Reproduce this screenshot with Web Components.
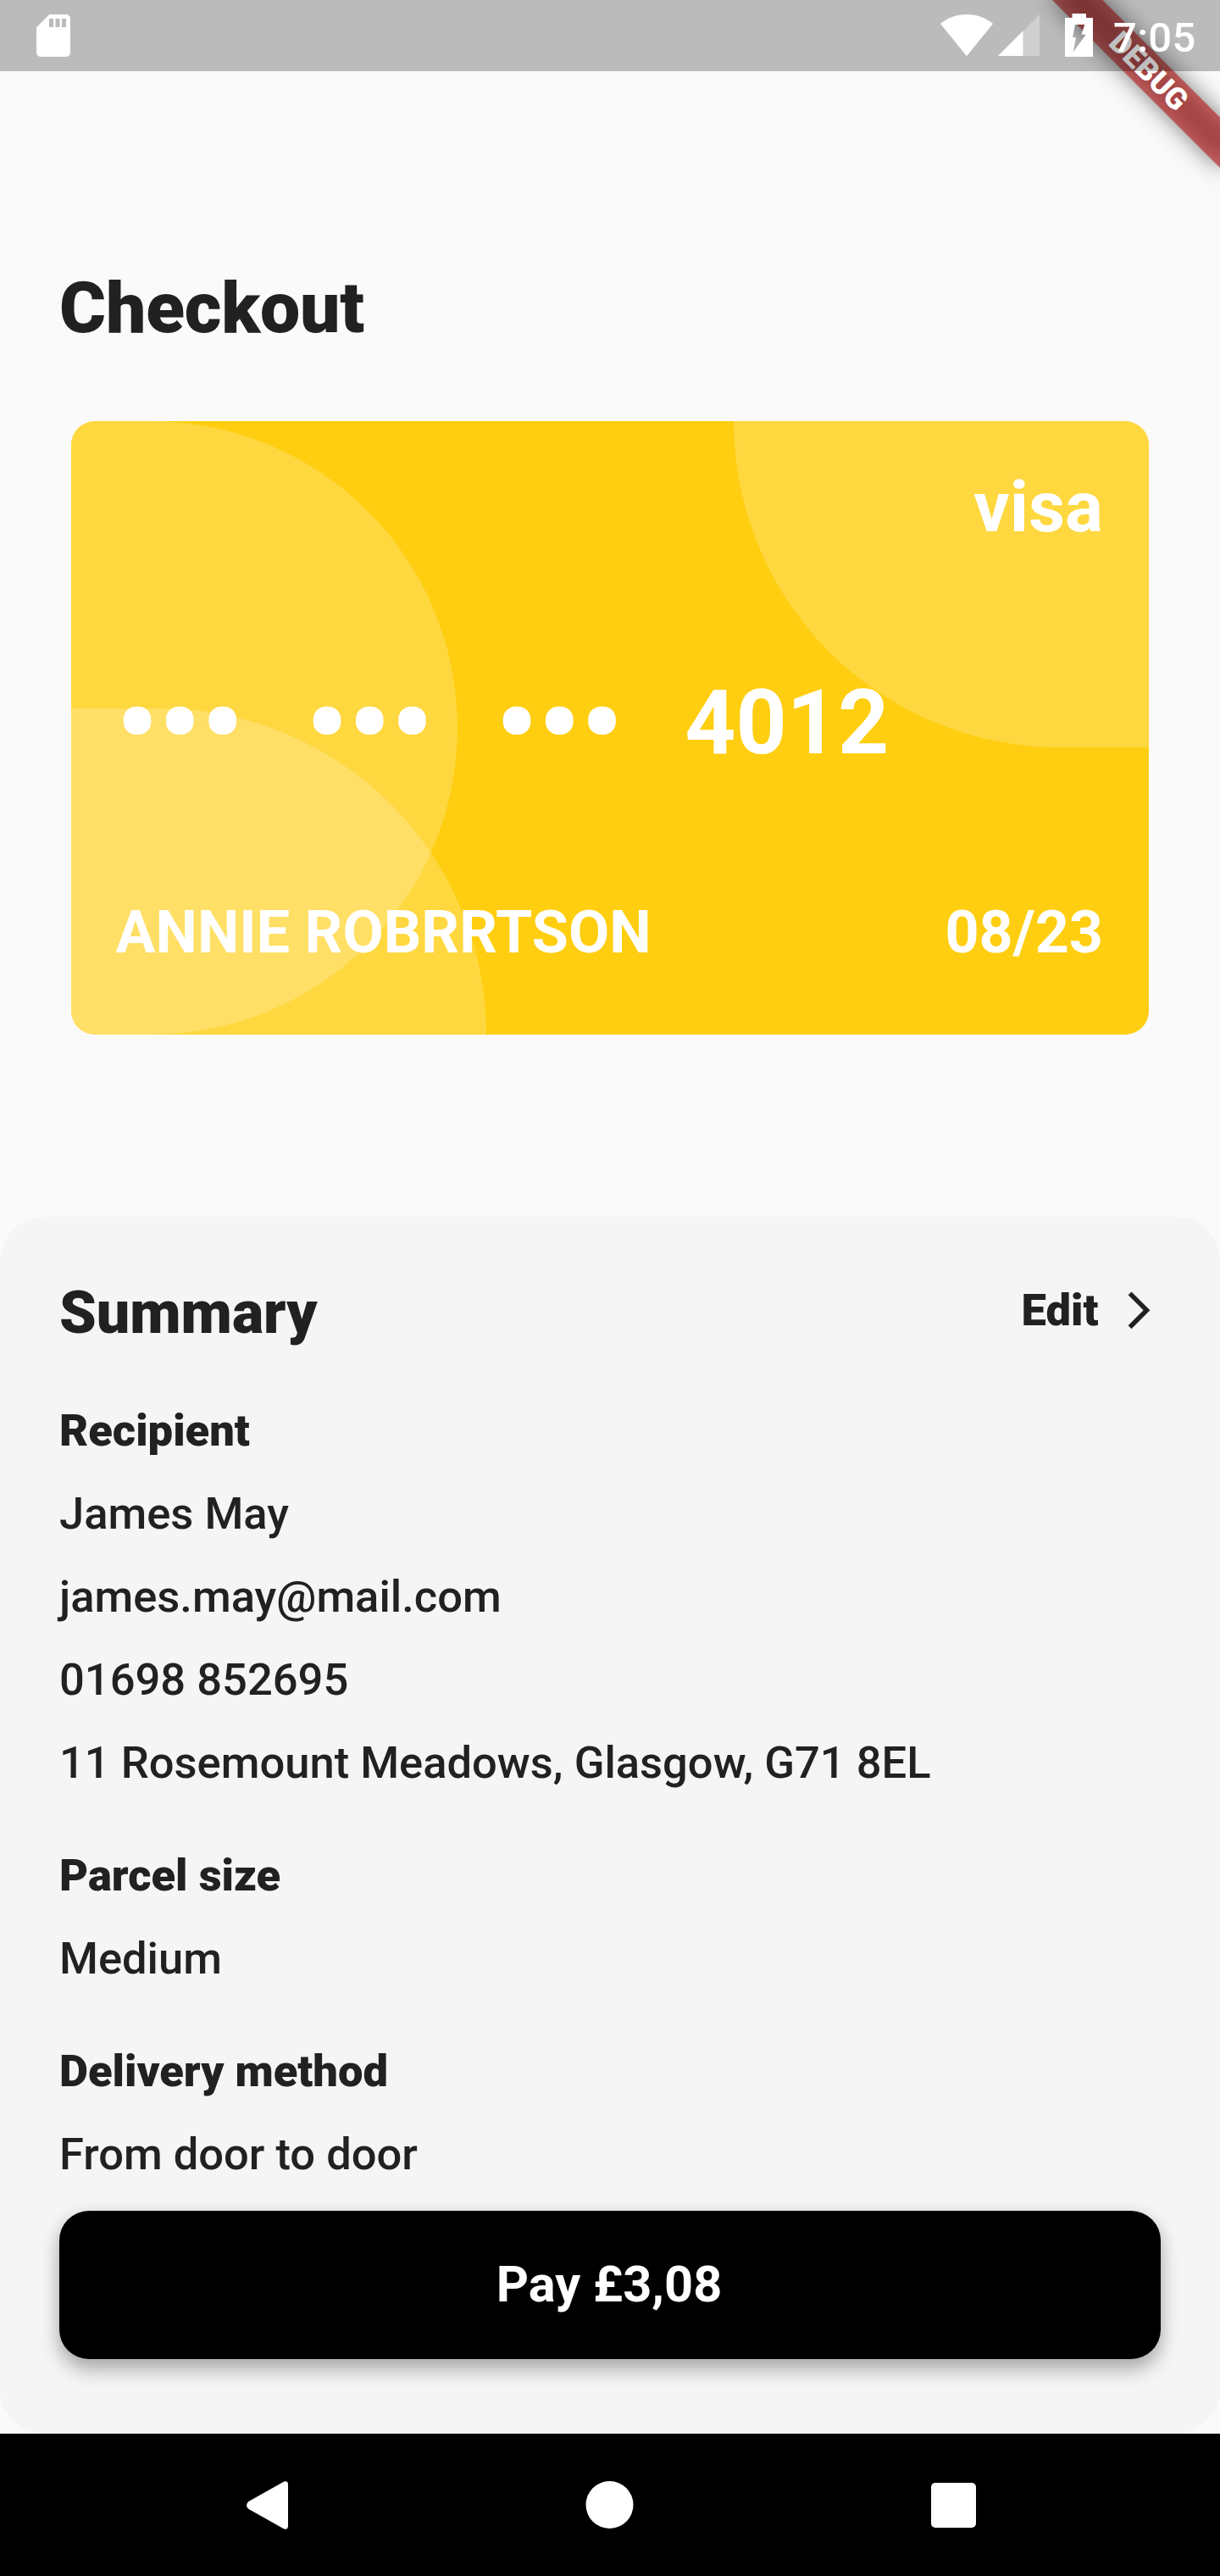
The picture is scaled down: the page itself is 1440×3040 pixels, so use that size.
<!DOCTYPE html>
<html lang="en">
<head>
<meta charset="utf-8">
<title>Checkout</title>
<style>
  html, body { margin: 0; padding: 0; background: #fafafa; }
  body { width: 1440px; height: 3040px; overflow: hidden; font-family: Roboto, sans-serif; color: #212121; }
</style>
</head>
<body>
<checkout-screen>
  <status-bar slot="status">7:05</status-bar>
  <debug-banner slot="banner">DEBUG</debug-banner>
  <span slot="title">Checkout</span>
  <bank-card slot="card">
    <span slot="brand">visa</span>
    <span slot="digits">4012</span>
    <span slot="holder">ANNIE ROBRRTSON</span>
    <span slot="expiry">08/23</span>
  </bank-card>
  <summary-panel slot="summary">
    <span slot="heading">Summary</span>
    <edit-link slot="action">Edit</edit-link>
    <summary-section heading="Recipient">
      <div>James May</div>
      <div>james.may@mail.com</div>
      <div>01698 852695</div>
      <div>11 Rosemount Meadows, Glasgow, G71 8EL</div>
    </summary-section>
    <summary-section heading="Parcel size"><div>Medium</div></summary-section>
    <summary-section heading="Delivery method"><div>From door to door</div></summary-section>
    <pay-button slot="footer">Pay £3,08</pay-button>
  </summary-panel>
  <nav-bar slot="nav"></nav-bar>
</checkout-screen>
<script>
function define(name, html) {
  const template = document.createElement('template');
  template.innerHTML = html;
  customElements.define(name, class extends HTMLElement {
    constructor() {
      super();
      this.attachShadow({ mode: 'open' }).appendChild(template.content.cloneNode(true));
    }
    connectedCallback() {
      const heading = this.shadowRoot.querySelector('[data-heading]');
      if (heading) heading.textContent = this.getAttribute('heading');
    }
  });
}

define('checkout-screen', `
  <style>
    :host { display: flex; flex-direction: column; position: relative; width: 1440px; height: 3040px; overflow: hidden; background: #fafafa; }
    h1 { margin: 0; padding: 315px 70px 0; height: 98px; font-size: 84px; line-height: 98px; font-weight: 900; letter-spacing: -.2px; }
    .card { padding: 84px 84px 0; height: 939px; }
  </style>
  <h1><slot name="title"></slot></h1>
  <div class="card"><slot name="card"></slot></div>
  <slot name="summary"></slot>
  <slot name="nav"></slot>
  <slot name="banner"></slot>
  <slot name="status"></slot>
`);

define('status-bar', `
  <style>
    :host { position: absolute; left: 0; top: 0; box-sizing: border-box; width: 1440px; height: 84px; padding: 16px 28px 0 43px; display: flex; align-items: flex-start; background: rgba(0,0,0,.25); color: #fff; font-size: 49px; font-weight: 500; line-height: 57px; }
    svg { display: block; flex: none; fill: #fff; }
    .sd { margin-right: auto; }
    .wifi { margin-right: 5px; }
    .cell { margin-right: 30px; }
    .clock { width: 98px; margin-left: 24px; letter-spacing: .3px; white-space: nowrap; }
  </style>
  <svg class="sd" width="40" height="51" viewBox="0 0 40 51"><path fill-rule="evenodd" d="M15.3 1H35a5 5 0 0 1 5 5V46a5 5 0 0 1-5 5H5a5 5 0 0 1-5-5V16.3ZM15 6V16H20V6ZM22.500 6V16H27.500V6ZM30 6V16H35V6Z"/></svg>
  <svg class="wifi" width="62" height="51" viewBox="0 0 62 51"><path d="M31 50.200 0 12C9 4.800 19.500 1 31 1S53 4.800 62 12Z"/></svg>
  <svg class="cell" width="50" height="51" viewBox="0 0 50 51"><path opacity=".3" d="M1 50 50 1V50Z"/><path d="M1 50 30.500 20.500V50Z"/></svg>
  <svg width="33" height="51" viewBox="0 0 33 51"><path fill-rule="evenodd" d="M8.500 0H25V5H33V51H0V5H8.500ZM12 13 9 28.300H13L9.500 45.800 24.700 24.800H19.500L23.300 13Z"/></svg>
  <span class="clock"><slot></slot></span>
`);

define('debug-banner', `
  <style>
    :host { position: absolute; left: 1440px; top: 0; width: 0; height: 0; transform: rotate(45deg); transform-origin: 0 0; }
    .shade, .band { position: absolute; left: -140px; top: 98px; width: 280px; height: 42px; }
    .shade { background: rgba(0,0,0,.5); filter: blur(13.9px); }
    .band { background: rgba(183,28,28,.627); color: #fff; text-align: center; font-size: 35.7px; line-height: 42px; font-weight: 900; }
  </style>
  <div class="shade"></div>
  <div class="band"><slot></slot></div>
`);

define('bank-card', `
  <style>
    :host { display: flex; flex-direction: column; justify-content: space-between; box-sizing: border-box; position: relative; height: 724.3px; padding: 57px 54px 80px 52.500px; border-radius: 28px; overflow: hidden; background: #ffce10; color: #fff; font-weight: 700; }
    .shape { position: absolute; background: rgba(255,255,255,.2); }
    .a { left: 0; top: 0; width: 455.500px; height: 100%; border-radius: 0 362px 362px 0; }
    .b { left: 0; bottom: 0; width: 490px; height: 385px; border-radius: 0 385px 0 0; }
    .c { right: 0; top: 0; width: 490px; height: 385px; border-radius: 0 0 0 385px; }
    .row { position: relative; display: flex; justify-content: space-between; white-space: nowrap; }
    .brand { justify-content: flex-end; font-size: 84px; line-height: 90px; }
    .number { justify-content: flex-start; gap: 73px; font-size: 105px; line-height: 124px; height: 124px; margin-top: 4px; }
    .dots { font-size: 140px; line-height: 122px; }
    .foot { font-size: 70px; line-height: 82px; }
  </style>
  <div class="shape a"></div><div class="shape b"></div><div class="shape c"></div>
  <div class="row brand"><slot name="brand"></slot></div>
  <div class="row number"><span class="dots">•••</span><span class="dots">•••</span><span class="dots">•••</span><slot name="digits"></slot></div>
  <div class="row foot"><slot name="holder"></slot><slot name="expiry"></slot></div>
`);

define('summary-panel', `
  <style>
    :host { display: block; box-sizing: border-box; height: 1436px; padding: 72px 70px 0; border-radius: 52.500px; background: #f5f5f5; }
    header { display: flex; justify-content: space-between; align-items: flex-start; height: 82px; margin-bottom: 49px; }
    h2 { margin: 0; font-size: 70px; line-height: 82px; font-weight: 900; }
    .body { display: flex; flex-direction: column; gap: 34.75px; margin-bottom: 18px; }
  </style>
  <header><h2><slot name="heading"></slot></h2><slot name="action"></slot></header>
  <div class="body"><slot></slot></div>
  <slot name="footer"></slot>
`);

define('edit-link', `
  <style>
    :host { display: flex; align-items: center; gap: 21px; height: 77px; font-size: 52.500px; line-height: 77px; font-weight: 900; }
    svg { display: block; fill: #212121; }
  </style>
  <span><slot></slot></span>
  <svg width="52.500" height="52.500" viewBox="0 0 24 24"><path d="M6.230 20.230 8 22l10-10L8 2 6.230 3.770 14.460 12Z"/></svg>
`);

define('summary-section', `
  <style>
    :host { display: block; font-size: 52.500px; line-height: 98px; font-weight: 500; }
    h3 { margin: 0; font-size: inherit; font-weight: 900; }
  </style>
  <h3 data-heading></h3>
  <slot></slot>
`);

define('pay-button', `
  <style>
    :host { display: flex; align-items: center; justify-content: center; box-sizing: border-box; height: 175px; padding-right: 2px; border-radius: 35px; background: #000; color: #fff; font-size: 59.500px; line-height: 70px; font-weight: 700; box-shadow: 0 14px 22px rgba(0,0,0,.24), 0 3px 20px rgba(0,0,0,.12); }
  </style>
  <span><slot></slot></span>
`);

define('nav-bar', `
  <style>
    :host { display: flex; align-items: center; box-sizing: border-box; height: 168px; padding: 0 288px 0 291px; justify-content: space-between; background: #000; }
    svg { display: block; fill: #fff; }
  </style>
  <svg width="49" height="57" viewBox="0 0 49 57"><path d="M2.500 24 43 1.200Q49 -1.500 49 4.500V52.500Q49 58.500 43 55.800L2.500 33Q-2.500 28.500 2.500 24Z"/></svg>
  <svg width="57" height="57" viewBox="0 0 57 57"><circle cx="28.500" cy="28" r="28"/></svg>
  <svg width="53" height="53" viewBox="0 0 53 53"><rect width="53" height="53" rx="5"/></svg>
`);
</script>
</body>
</html>
